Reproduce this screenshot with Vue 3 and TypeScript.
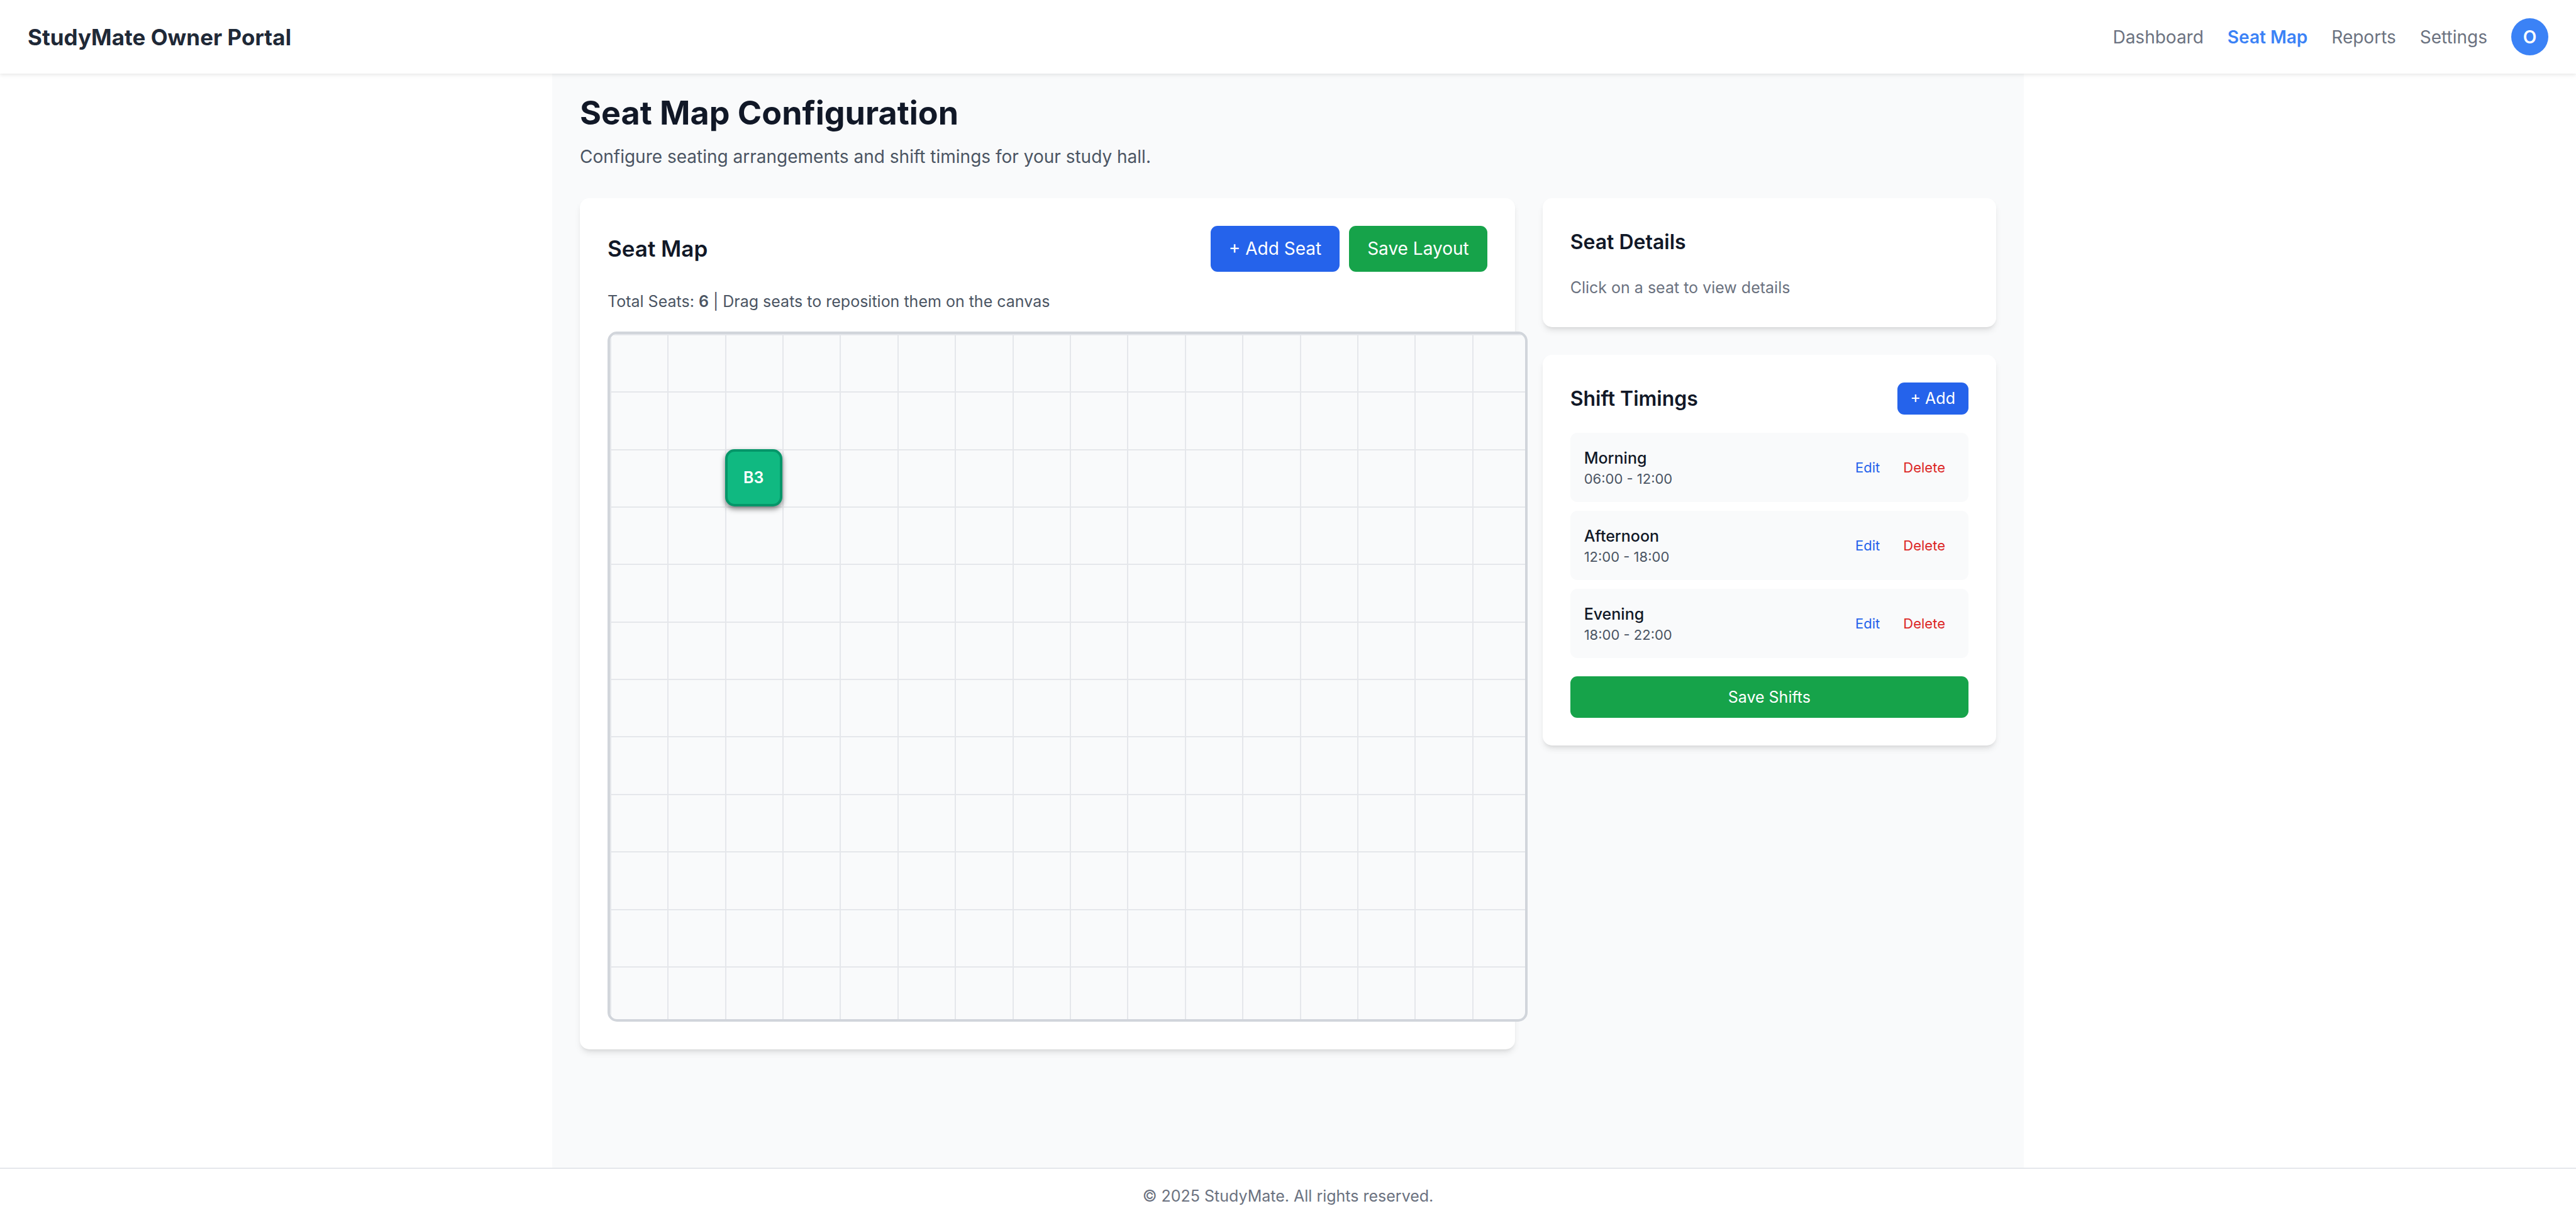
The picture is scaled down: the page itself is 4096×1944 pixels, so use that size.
<script setup lang="ts">
import { computed, ref } from 'vue'

interface Shift {
  id: number
  name: string
  start: string
  end: string
}

interface Seat {
  id: string
  col: number
  row: number
}

const navLinks = ['Dashboard', 'Seat Map', 'Reports', 'Settings']
const activeLink = 'Seat Map'

const totalSeats = 6
const seats = ref<Seat[]>([{ id: 'B3', col: 2, row: 2 }])

const shifts = ref<Shift[]>([
  { id: 1, name: 'Morning', start: '06:00', end: '12:00' },
  { id: 2, name: 'Afternoon', start: '12:00', end: '18:00' },
  { id: 3, name: 'Evening', start: '18:00', end: '22:00' },
])

// Canvas grid, in the drawing units of the SVG's viewBox.
const cell = 100
const gridWidth = 1592
const gridHeight = 1192
const columns = computed(() => Array.from({ length: Math.ceil(gridWidth / cell) }, (_, i) => i * cell + 1))
const rows = computed(() => Array.from({ length: Math.ceil(gridHeight / cell) }, (_, i) => i * cell + 1))

function seatStyle(seat: Seat) {
  return {
    left: `${((seat.col * cell) / gridWidth) * 100}%`,
    top: `${((seat.row * cell) / gridHeight) * 100}%`,
  }
}
</script>

<template>
  <div class="page">
    <header class="topbar">
      <div class="brand">StudyMate Owner Portal</div>
      <nav class="nav">
        <a v-for="link in navLinks" :key="link" href="#" :class="{ active: link === activeLink }">{{ link }}</a>
        <span class="avatar">O</span>
      </nav>
    </header>

    <main class="main">
      <h1>Seat Map Configuration</h1>
      <p class="lead">Configure seating arrangements and shift timings for your study hall.</p>

      <div class="layout">
        <section class="card map-card">
          <div class="map-head">
            <h2>Seat Map</h2>
            <div class="actions">
              <button type="button" class="btn blue">+ Add Seat</button>
              <button type="button" class="btn green">Save Layout</button>
            </div>
          </div>
          <p class="info">Total Seats: <strong>{{ totalSeats }}</strong> | Drag seats to reposition them on the canvas</p>
          <div class="canvas">
            <svg class="grid" :viewBox="`0 0 ${gridWidth} ${gridHeight}`" preserveAspectRatio="none" aria-hidden="true">
              <line v-for="x in columns" :key="`c${x}`" :x1="x" y1="0" :x2="x" :y2="gridHeight" />
              <line v-for="y in rows" :key="`r${y}`" x1="0" :y1="y" :x2="gridWidth" :y2="y" />
            </svg>
            <button v-for="seat in seats" :key="seat.id" type="button" class="seat" :style="seatStyle(seat)">{{ seat.id }}</button>
          </div>
        </section>

        <aside class="side">
          <section class="card">
            <h3 class="details-title">Seat Details</h3>
            <p class="hint">Click on a seat to view details</p>
          </section>

          <section class="card">
            <div class="shift-head">
              <h3>Shift Timings</h3>
              <button type="button" class="btn blue small">+ Add</button>
            </div>
            <ul class="shifts">
              <li v-for="shift in shifts" :key="shift.id" class="shift">
                <div>
                  <div class="shift-name">{{ shift.name }}</div>
                  <div class="shift-time">{{ shift.start }} - {{ shift.end }}</div>
                </div>
                <div class="shift-actions">
                  <button type="button" class="text-btn edit">Edit</button>
                  <button type="button" class="text-btn delete">Delete</button>
                </div>
              </li>
            </ul>
            <button type="button" class="btn green save">Save Shifts</button>
          </section>
        </aside>
      </div>
    </main>

    <footer class="footer">© 2025 StudyMate. All rights reserved.</footer>
  </div>
</template>

<style>
body {
  margin: 0;
  background: #fff;
}
</style>

<style scoped>
.page {
  display: flex;
  flex-direction: column;
  min-height: 100vh;
  font-family: Inter, 'Liberation Sans', sans-serif;
  font-size: 28px;
  line-height: 44px;
  color: #111827;
}

h1,
h2,
h3,
p,
ul {
  margin: 0;
  padding: 0;
}

button {
  font-family: inherit;
  border: 0;
  cursor: pointer;
}

.topbar {
  position: relative;
  z-index: 1;
  display: flex;
  align-items: center;
  justify-content: space-between;
  height: 117px;
  padding: 0 44px;
  background: #fff;
  box-shadow: 0 2px 6px rgba(0, 0, 0, 0.1);
}

.brand {
  font-size: 35px;
  font-weight: 700;
  color: #1f2937;
}

.nav {
  display: flex;
  align-items: center;
  gap: 38px;
}

.nav a {
  color: #6b7280;
  text-decoration: none;
}

.nav a.active {
  color: #3b82f6;
  font-weight: 600;
}

.avatar {
  display: flex;
  align-items: center;
  justify-content: center;
  width: 59px;
  height: 59px;
  border-radius: 50%;
  background: #3b82f6;
  color: #fff;
  font-weight: 600;
}

.main {
  flex: 1;
  box-sizing: border-box;
  width: 100%;
  max-width: 2340px;
  margin: 0 auto;
  padding: 29px 44px 44px;
  background: #f9fafb;
}

h1 {
  margin-bottom: 13px;
  font-size: 52px;
  font-weight: 700;
  line-height: 68px;
}

.lead {
  margin-bottom: 44px;
  color: #4b5563;
}

.layout {
  display: grid;
  grid-template-columns: repeat(3, minmax(0, 1fr));
  align-items: start;
  gap: 44px;
}

.map-card {
  grid-column: span 2;
}

.card {
  padding: 44px;
  border-radius: 15px;
  background: #fff;
  box-shadow:
    0 7px 11px -2px rgba(0, 0, 0, 0.1),
    0 4px 7px -4px rgba(0, 0, 0, 0.1);
}

.map-head,
.shift-head {
  display: flex;
  align-items: center;
  justify-content: space-between;
  margin-bottom: 29px;
}

h2 {
  font-size: 35px;
  font-weight: 600;
  line-height: 51px;
}

h3 {
  font-size: 32px;
  font-weight: 600;
  line-height: 51px;
}

.actions {
  display: flex;
  gap: 15px;
}

.btn {
  padding: 15px 29px;
  border-radius: 11px;
  color: #fff;
  font-size: 28px;
  line-height: 43px;
}

.blue {
  background: #2563eb;
}

.green {
  background: #16a34a;
}

.btn.small {
  padding: 7px 21px;
  font-size: 25px;
  line-height: 37px;
}

.btn.save {
  width: 100%;
  margin-top: 29px;
  font-size: 25px;
  line-height: 36px;
}

.info,
.hint {
  font-size: 25px;
  line-height: 37px;
}

.info {
  margin-bottom: 29px;
  color: #4b5563;
}

.info strong {
  font-weight: 600;
}

.canvas {
  position: relative;
  box-sizing: border-box;
  width: 1463px;
  height: 1097px;
  overflow: hidden;
  border: 4px solid #d1d5db;
  border-radius: 15px;
  background: #f9fafb;
}

.grid {
  display: block;
  width: 100%;
  height: 100%;
}

.grid line {
  stroke: #e5e7eb;
  stroke-width: 2px;
  vector-effect: non-scaling-stroke;
  shape-rendering: crispEdges;
}

.seat {
  position: absolute;
  box-sizing: border-box;
  width: 91px;
  height: 91px;
  padding: 0;
  border: 4px solid #059669;
  border-radius: 15px;
  background: #10b981;
  box-shadow: 0 4px 8px rgba(0, 0, 0, 0.5);
  color: #fff;
  font-size: 25px;
  font-weight: 600;
}

.side {
  display: flex;
  flex-direction: column;
  gap: 44px;
}

.details-title {
  margin-bottom: 29px;
}

.hint {
  color: #6b7280;
}

.shifts {
  display: flex;
  flex-direction: column;
  gap: 14px;
  list-style: none;
}

.shift {
  display: flex;
  align-items: center;
  justify-content: space-between;
  padding: 22px;
  border-radius: 11px;
  background: #f9fafb;
}

.shift-name {
  font-size: 25px;
  font-weight: 500;
  line-height: 37px;
}

.shift-time {
  color: #4b5563;
  font-size: 22px;
  line-height: 29px;
}

.shift-actions {
  display: flex;
  gap: 7px;
}

.text-btn {
  padding: 7px 15px;
  background: transparent;
  font-size: 22px;
  line-height: 29px;
}

.edit {
  color: #2563eb;
}

.delete {
  color: #dc2626;
}

.footer {
  padding: 25px 44px 24px;
  border-top: 2px solid #e5e7eb;
  background: #fff;
  color: #6b7280;
  font-size: 25px;
  line-height: 37px;
  text-align: center;
}
</style>
